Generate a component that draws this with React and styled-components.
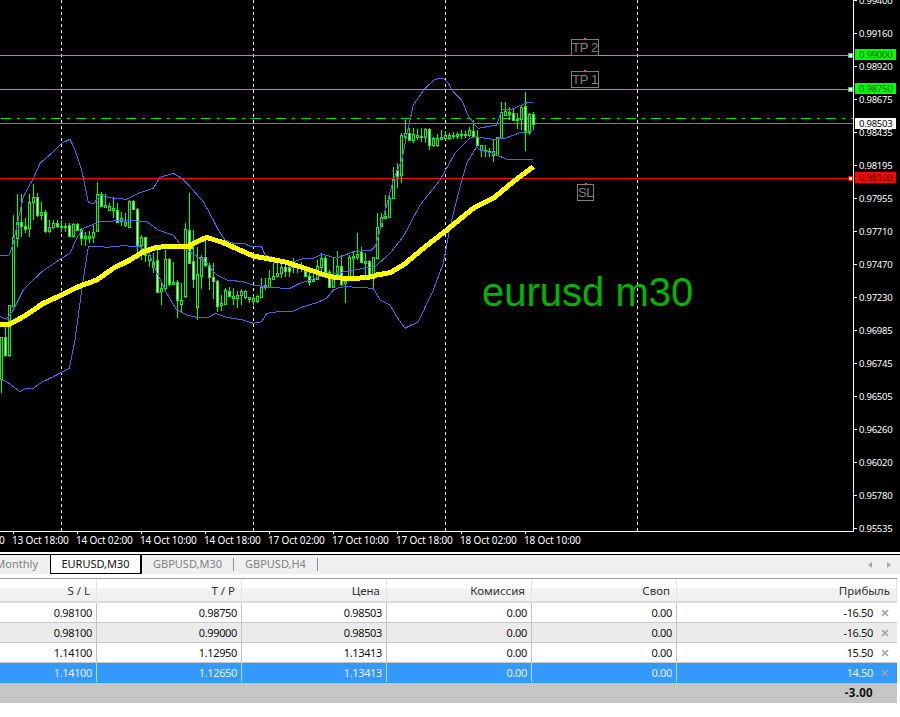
import React from 'react';
import styled, { createGlobalStyle } from 'styled-components';
import { X } from 'lucide-react';

const GlobalStyle = createGlobalStyle`
  body {
    margin: 0;
    background: #fff;
    font-family: "Noto Sans", "Liberation Sans", sans-serif;
    overflow: hidden;
  }
`;

// candles read off the chart: [wick top, wick bottom, body top, body bottom, white body]
// values are in 3x crop units, oy is the y of the crop
const toCandles = (oy, rows) =>
  rows.map(([wt, wb, bt, bb, w]) => ({
    wt: oy + wt / 3,
    wb: oy + wb / 3,
    bt: oy + bt / 3,
    bb: oy + bb / 3,
    w,
  }));

const candles = [
  ...toCandles(120, [
    [652, 820, 652, 778, 0], [620, 710, 652, 705, 1], [555, 710, 555, 705, 0], [285, 557, 350, 557, 0],
    [222, 382, 305, 352, 0], [222, 350, 305, 317, 1], [295, 340, 317, 325, 1], [222, 350, 247, 325, 0],
    [192, 300, 232, 247, 0], [218, 290, 232, 285, 1], [245, 300, 275, 285, 0], [270, 338, 275, 332, 1],
    [300, 338, 322, 335, 0], [300, 328, 310, 322, 0], [300, 325, 310, 320, 1], [300, 335, 318, 322, 0],
    [310, 335, 318, 322, 0], [310, 350, 315, 347, 1], [310, 350, 312, 347, 0], [310, 332, 312, 330, 1],
    [325, 375, 327, 355, 1], [335, 378, 349, 355, 0], [332, 370, 347, 352, 0], [315, 370, 335, 350, 0],
    [185, 335, 222, 332, 0], [215, 260, 222, 257, 1], [222, 265, 255, 262, 0], [250, 270, 257, 268, 0],
    [230, 295, 265, 272, 0], [250, 310, 270, 305, 1], [275, 318, 295, 305, 0], [280, 320, 305, 315, 0],
    [240, 322, 243, 320, 0], [240, 270, 243, 268, 1], [265, 418, 268, 375, 1], [345, 420, 352, 375, 0],
    [350, 425, 352, 405, 1], [395, 440, 405, 420, 0], [400, 460, 425, 440, 0], [385, 520, 420, 515, 1],
    [490, 555, 505, 515, 0], [390, 510, 418, 505, 0], [415, 498, 418, 492, 1], [425, 490, 485, 490, 0],
    [480, 595, 485, 540, 1], [490, 575, 540, 552, 0], [310, 535, 328, 530, 0], [220, 432, 330, 428, 1],
  ]),
  ...toCandles(180, [
    [150, 325, 243, 298, 1], [200, 420, 283, 382, 0], [225, 328, 230, 287, 0], [165, 260, 230, 254, 1],
    [250, 330, 254, 290, 1], [250, 358, 292, 305, 1], [300, 395, 303, 377, 1], [345, 392, 370, 377, 0],
    [325, 375, 330, 372, 0], [320, 352, 334, 350, 1], [325, 375, 347, 353, 0], [333, 385, 345, 353, 0],
    [328, 375, 334, 347, 0], [330, 358, 334, 352, 0], [350, 368, 352, 357, 0], [348, 375, 354, 362, 0],
    [345, 368, 347, 362, 0], [295, 355, 321, 352, 0], [295, 330, 316, 322, 0], [270, 325, 294, 320, 0],
    [250, 298, 287, 296, 0], [250, 292, 279, 287, 0], [252, 295, 262, 281, 0], [250, 292, 262, 275, 1],
    [250, 290, 262, 275, 1], [235, 280, 250, 262, 0], [250, 278, 258, 262, 0], [245, 275, 258, 265, 0],
    [262, 290, 272, 287, 1], [270, 318, 287, 305, 1], [280, 305, 297, 303, 0], [240, 300, 258, 297, 0],
    [220, 290, 235, 262, 0], [225, 280, 235, 278, 1], [270, 322, 275, 320, 1], [232, 322, 290, 320, 0],
    [212, 295, 257, 282, 0], [225, 318, 257, 312, 1], [290, 368, 303, 310, 0], [225, 290, 230, 288, 0],
    [213, 290, 228, 235, 0], [160, 240, 222, 232, 0],
  ]),
  ...toCandles(120, [
    [380, 430, 397, 428, 1], [400, 468, 424, 430, 0], [420, 470, 424, 468, 1], [410, 505, 412, 468, 0],
    [280, 415, 320, 412, 0], [280, 322, 290, 318, 0], [225, 295, 287, 292, 0], [225, 295, 235, 292, 0],
    [140, 238, 178, 235, 0], [130, 205, 150, 168, 1], [40, 190, 46, 165, 0], [0, 60, 38, 46, 0],
    [25, 62, 40, 60, 1], [25, 70, 42, 60, 0], [28, 60, 44, 50, 0], [25, 65, 48, 52, 0],
    [25, 68, 28, 52, 0], [25, 90, 28, 76, 1], [50, 82, 55, 76, 0], [42, 80, 55, 76, 0],
    [30, 60, 50, 56, 0], [34, 60, 44, 52, 0], [38, 60, 46, 55, 0], [36, 56, 46, 50, 0],
    [35, 58, 42, 48, 0], [30, 56, 42, 46, 0], [32, 54, 42, 46, 0], [22, 50, 30, 44, 0],
    [0, 55, 34, 50, 1],
  ]),
  ...toCandles(30, [
    [300, 348, 320, 345, 1], [345, 380, 344, 358, 0], [345, 382, 360, 362, 0], [355, 382, 362, 364, 0],
    [330, 395, 362, 373, 0], [320, 378, 322, 375, 0], [215, 325, 245, 322, 0], [215, 258, 243, 254, 0],
    [230, 270, 245, 250, 0], [235, 272, 248, 270, 1], [250, 298, 266, 270, 0], [228, 300, 232, 268, 0],
    [185, 362, 228, 305, 1], [250, 315, 252, 305, 0], [247, 300, 252, 282, 1],
  ]),
];

// indicator lines, read off the same crops
const fromCrop = (ox, oy, pts) => pts.map(([a, b]) => [ox + a / 3, oy + b / 3]);

const toPoints = (pts) => pts.map(([x, y]) => `${x.toFixed(1)},${y.toFixed(1)}`).join(' ');

const upperBand = toPoints([
  ...fromCrop(0, 120, [[0, 406], [28, 405], [40, 370], [50, 320], [70, 230], [100, 175], [120, 130], [160, 95], [185, 70], [210, 58], [225, 90], [245, 150], [265, 248], [282, 250], [300, 225], [340, 235], [380, 238], [420, 218], [460, 205], [480, 172], [520, 160], [545, 175]]),
  ...fromCrop(190, 180, [[0, 20], [40, 65], [70, 120], [85, 150], [105, 180], [130, 190], [160, 190], [185, 200], [215, 200], [225, 225], [300, 248], [340, 236], [370, 235], [395, 222], [440, 235], [490, 215], [545, 210]]),
  ...fromCrop(360, 120, [[45, 380], [55, 350], [100, 180], [125, 120]]),
  ...fromCrop(380, 30, [[88, 280], [100, 225], [135, 175], [165, 148], [190, 145], [205, 160], [220, 185], [245, 210], [265, 258], [285, 285], [295, 295], [350, 285], [365, 240], [395, 238], [425, 225], [445, 217], [460, 217]]),
]);

const middleBand = toPoints([
  ...fromCrop(0, 120, [[0, 590], [20, 598], [40, 570], [70, 510], [100, 480], [125, 455], [185, 415], [210, 400], [230, 355], [250, 325], [300, 305], [340, 303], [400, 302], [440, 305], [475, 330], [520, 345], [545, 380], [600, 415]]),
  ...fromCrop(190, 180, [[50, 250], [80, 285], [110, 300], [160, 305], [190, 315], [240, 323], [300, 325], [330, 310], [400, 287], [440, 280], [490, 270]]),
  ...fromCrop(360, 120, [[45, 440], [90, 400], [130, 350], [180, 255], [200, 230], [240, 180], [285, 100], [330, 55], [345, 50], [400, 58], [435, 55], [480, 38], [515, 32]]),
]);

const lowerBand = toPoints([
  ...fromCrop(0, 120, [[0, 778], [20, 785], [60, 815], [80, 805], [100, 805], [125, 787], [160, 770], [208, 745], [225, 660], [245, 510], [265, 380], [280, 378], [320, 382], [370, 377], [420, 380], [445, 395], [465, 445], [500, 520], [530, 570], [560, 585]]),
  ...fromCrop(190, 180, [[20, 412], [55, 413], [75, 400], [110, 412], [160, 420], [190, 430], [215, 425], [230, 400], [265, 395], [305, 395], [340, 380], [380, 368], [410, 355], [430, 330], [450, 322], [470, 320]]),
  ...fromCrop(360, 120, [[40, 505], [60, 540], [90, 555], [110, 590], [135, 625], [175, 605], [220, 510], [250, 430], [270, 320], [300, 200], [320, 130], [350, 80], [360, 90], [400, 100], [440, 118], [520, 118]]),
]);

const movingAverage = toPoints([
  ...fromCrop(0, 120, [[0, 612], [30, 612], [70, 590], [100, 570], [130, 550], [185, 525], [240, 498], [290, 480], [340, 445], [390, 420], [430, 395], [470, 382], [530, 378], [570, 378]]),
  ...fromCrop(190, 180, [[0, 195], [50, 172], [100, 188], [190, 228], [290, 247], [360, 270], [420, 290], [480, 297], [550, 290]]),
  ...fromCrop(360, 120, [[50, 465], [90, 458], [130, 435], [190, 385], [260, 330], [340, 265], [400, 235], [460, 185], [520, 140]]),
]);

const priceScale = ['0.99400', '0.99160', '0.98920', '0.98675', '0.98435', '0.98195', '0.97955', '0.97710', '0.97470', '0.97230', '0.96985', '0.96745', '0.96505', '0.96260', '0.96020', '0.95780', '0.95535'];

const timeScale = ['13 Oct 10:00', '13 Oct 18:00', '14 Oct 02:00', '14 Oct 10:00', '14 Oct 18:00', '17 Oct 02:00', '17 Oct 10:00', '17 Oct 18:00', '18 Oct 02:00', '18 Oct 10:00'];

const orderBadges = [
  { price: '0.99000', top: 49, bg: '#00ff00', color: '#004d00' },
  { price: '0.98750', top: 83, bg: '#00ff00', color: '#004d00' },
  { price: '0.98503', top: 118, bg: '#ffffff', color: '#000' },
  { price: '0.98100', top: 172, bg: '#ff0000', color: '#3d0000' },
];

const tradeTags = [
  { label: 'TP 2', x: 571, y: 39, width: 28 },
  { label: 'TP 1', x: 571, y: 71, width: 28 },
  { label: 'SL', x: 577, y: 184, width: 17 },
];

const columns = ['S / L', 'T / P', 'Цена', 'Комиссия', 'Своп', 'Прибыль'];

const orders = [
  { sl: '0.98100', tp: '0.98750', price: '0.98503', profit: '-16.50', tone: 'plain' },
  { sl: '0.98100', tp: '0.99000', price: '0.98503', profit: '-16.50', tone: 'alt' },
  { sl: '1.14100', tp: '1.12950', price: '1.13413', profit: '15.50', tone: 'plain' },
  { sl: '1.14100', tp: '1.12650', price: '1.13413', profit: '14.50', tone: 'selected' },
];

const rowColors = {
  plain: '#ffffff',
  alt: '#ebebeb',
  selected: '#3399ff',
  total: '#c6c6c6',
};

const App = () => {
  return (
    <Page>
      <GlobalStyle />
      <Chart>
        <ChartBody>
          <Plot>
            <PlotSvg viewBox="0 0 853 531" width="853" height="531">
              {[61, 253, 445, 637].map((x) => (
                <line key={x} x1={x + 0.5} x2={x + 0.5} y1="0" y2="531" stroke="#fff" strokeDasharray="3 3" />
              ))}
              <line x1="0" x2="853" y1="55.5" y2="55.5" stroke="#00ff00" />
              <line x1="0" x2="853" y1="89.5" y2="89.5" stroke="#00ff00" />
              <line x1="1" x2="853" y1="118.5" y2="118.5" stroke="#00e000" strokeDasharray="10 6 3 6" />
              <line x1="0" x2="853" y1="123.5" y2="123.5" stroke="#808080" />
              <line x1="0" x2="853" y1="178.5" y2="178.5" stroke="#ff0000" />
              {candles.map((c, i) => {
                const x = 1 + i * 4;
                return (
                  <g key={i}>
                    <line x1={x + 0.5} x2={x + 0.5} y1={c.wt} y2={c.wb} stroke="#00ff00" />
                    <rect
                      x={x - 0.5}
                      y={Math.round(c.bt) + 0.5}
                      width="2"
                      height={Math.max(1, Math.round(c.bb - c.bt))}
                      fill={c.w ? '#fff' : '#000'}
                      stroke="#00ff00"
                    />
                  </g>
                );
              })}
              <polyline points={upperBand} fill="none" stroke="#4169e1" />
              <polyline points={middleBand} fill="none" stroke="#4169e1" />
              <polyline points={lowerBand} fill="none" stroke="#4169e1" />
              <polyline points={movingAverage} fill="none" stroke="#ffff00" strokeWidth="5" />
              {[[55, '#00ff00'], [89, '#00ff00'], [178, '#ff0000']].map(([y, color]) => (
                <rect key={y} x="848.5" y={y - 2 + 0.5} width="4" height="4" fill="#fff" stroke={color} />
              ))}
            </PlotSvg>
            {tradeTags.map((tag) => (
              <TradeTag key={tag.label} $x={tag.x} $y={tag.y} $width={tag.width}>{tag.label}</TradeTag>
            ))}
            <PairTitle>eurusd m30</PairTitle>
          </Plot>
          <PriceAxis>
            {priceScale.map((price) => (
              <PriceTick key={price}>{price}</PriceTick>
            ))}
            {orderBadges.map((badge) => (
              <PriceBadge key={badge.price} $top={badge.top} $bg={badge.bg} $color={badge.color}>
                {badge.price}
              </PriceBadge>
            ))}
          </PriceAxis>
        </ChartBody>
        <TimeAxis>
          {timeScale.map((time) => (
            <TimeTick key={time}>{time}</TimeTick>
          ))}
        </TimeAxis>
      </Chart>

      <TabBar>
        <ClippedTab>Monthly</ClippedTab>
        <ActiveTab>EURUSD,M30</ActiveTab>
        <Tab>GBPUSD,M30</Tab>
        <Tab>GBPUSD,H4</Tab>
        <TabArrows>
          <ArrowLeft />
          <ArrowRight />
        </TabArrows>
      </TabBar>

      <Terminal>
        <HeaderRow>
          {columns.map((name) => (
            <HeaderCell key={name}>{name}</HeaderCell>
          ))}
        </HeaderRow>
        {orders.map((order, i) => (
          <Row key={i} $tone={order.tone}>
            <Cell $tone={order.tone}>{order.sl}</Cell>
            <Cell $tone={order.tone}>{order.tp}</Cell>
            <Cell $tone={order.tone}>{order.price}</Cell>
            <Cell $tone={order.tone}>0.00</Cell>
            <Cell $tone={order.tone}>0.00</Cell>
            <ProfitCell $tone={order.tone}>
              {order.profit}
              <CloseIcon><X size={10} strokeWidth={4} color="#a3a3a3" /></CloseIcon>
            </ProfitCell>
          </Row>
        ))}
        <TotalRow>
          <TotalValue>-3.00</TotalValue>
        </TotalRow>
      </Terminal>
    </Page>
  );
};

export default App;

const Page = styled.div`
  width: 900px;
  height: 717px;
  display: flex;
  flex-direction: column;
  background: #fff;
`;

const Chart = styled.div`
  height: 552px;
  flex: none;
  background: #000;
  overflow: hidden;
`;

const ChartBody = styled.div`
  display: flex;
  height: 532px;
`;

const Plot = styled.div`
  position: relative;
  flex: none;
  width: 854px;
  height: 532px;
  box-sizing: border-box;
  border-right: 1px solid #fff;
  border-bottom: 1px solid #fff;
`;

const PlotSvg = styled.svg`
  display: block;
  shape-rendering: crispEdges;
`;

const TradeTag = styled.div`
  position: absolute;
  left: ${(props) => props.$x}px;
  top: ${(props) => props.$y}px;
  width: ${(props) => props.$width}px;
  box-sizing: border-box;
  height: 17px;
  border: 1px solid #808080;
  color: #808080;
  font-family: "Liberation Sans", sans-serif;
  font-size: 13px;
  letter-spacing: -0.3px;
  line-height: 15px;
  text-align: center;
  white-space: nowrap;

  &::before {
    content: "";
    position: absolute;
    top: -2px;
    left: 50%;
    width: 2px;
    height: 2px;
    margin-left: -1px;
    background: #e05050;
  }
`;

const PairTitle = styled.div`
  position: absolute;
  left: 482px;
  top: 269px;
  color: #00b400;
  font-family: "Liberation Sans", sans-serif;
  font-size: 40px;
  line-height: 46px;
  white-space: nowrap;
`;

const PriceAxis = styled.div`
  position: relative;
  flex: 1;
  display: flex;
  flex-direction: column;
  margin-top: -16px;
`;

const PriceTick = styled.div`
  position: relative;
  flex: none;
  height: 33px;
  padding-left: 5px;
  color: #fff;
  font-size: 9.5px;
  letter-spacing: -0.25px;
  line-height: 33px;

  &::before {
    content: "";
    position: absolute;
    left: 0;
    top: 16px;
    width: 3px;
    height: 1px;
    background: #fff;
  }
`;

const PriceBadge = styled.div`
  position: absolute;
  left: 1px;
  top: ${(props) => props.$top + 16}px;
  width: 41px;
  height: 11px;
  padding-left: 4px;
  box-sizing: border-box;
  background: ${(props) => props.$bg};
  color: ${(props) => props.$color};
  font-size: 9.5px;
  letter-spacing: -0.25px;
  line-height: 11px;
`;

const TimeAxis = styled.div`
  display: flex;
  height: 20px;
  margin-left: -52px;
`;

const TimeTick = styled.div`
  position: relative;
  flex: none;
  width: 64px;
  padding-top: 1px;
  color: #fff;
  font-size: 10px;
  letter-spacing: -0.15px;
  line-height: 14px;
  white-space: nowrap;

  &::before {
    content: "";
    position: absolute;
    left: 1px;
    top: -1px;
    width: 1px;
    height: 3px;
    background: #fff;
  }
`;

const TabBar = styled.div`
  flex: none;
  display: flex;
  align-items: stretch;
  height: 20px;
  margin-top: 2px;
  box-sizing: border-box;
  border-top: 1px solid #000;
  background: #f0f0f0;
  color: #808080;
  font-size: 11px;
  line-height: 18px;
`;

const ClippedTab = styled.div`
  flex: none;
  width: 38px;
  padding-right: 12px;
  display: flex;
  justify-content: flex-end;
`;

const ActiveTab = styled.div`
  flex: none;
  width: 92px;
  box-sizing: border-box;
  text-align: center;
  background: #fff;
  color: #111;
  border-left: 1px solid #000;
  border-right: 2px solid #000;
  border-bottom: 1px solid #000;
`;

const Tab = styled.div`
  flex: none;
  position: relative;
  padding: 0 12px 0 11px;
  white-space: nowrap;

  &::after {
    content: "";
    position: absolute;
    right: 0;
    top: 3px;
    width: 1px;
    height: 13px;
    background: #909090;
  }
`;

const TabArrows = styled.div`
  margin-left: auto;
  display: flex;
  align-items: center;
  gap: 15px;
  padding-right: 9px;
`;

const ArrowLeft = styled.span`
  width: 0;
  height: 0;
  border-top: 3.5px solid transparent;
  border-bottom: 3.5px solid transparent;
  border-right: 4px solid #a8a8a8;
`;

const ArrowRight = styled.span`
  width: 0;
  height: 0;
  border-top: 3.5px solid transparent;
  border-bottom: 3.5px solid transparent;
  border-left: 4px solid #a8a8a8;
`;

const Terminal = styled.div`
  flex: none;
  width: 897px;
  margin-top: 4px;
  border-top: 1px solid #a0a0a0;
  font-size: 11px;
  letter-spacing: -0.35px;
`;

const HeaderRow = styled.div`
  display: grid;
  grid-template-columns: 97px repeat(4, 145px) 1fr;
  height: 24px;
  box-sizing: border-box;
  border-bottom: 2px solid #dcdcdc;
  background: linear-gradient(#fff 0, #fff 40%, #f2f2f2 45%, #f0f0f0 100%);
  font-size: 11.5px;
  letter-spacing: 0;
`;

const HeaderCell = styled.div`
  padding-right: 6px;
  text-align: right;
  color: #333;
  line-height: 23px;
  border-right: 1px solid #e4e4e4;
`;

const Row = styled.div`
  display: grid;
  grid-template-columns: 97px repeat(4, 145px) 1fr;
  height: 20px;
  box-sizing: border-box;
  background: ${(props) => rowColors[props.$tone]};
  border-bottom: 1px solid ${(props) => (props.$tone === 'selected' ? '#3399ff' : '#c8c8c8')};
`;

const Cell = styled.div`
  padding-right: 4px;
  text-align: right;
  line-height: 19px;
  color: ${(props) => (props.$tone === 'selected' ? '#e6f2ff' : '#111')};
  border-right: 1px solid ${(props) => (props.$tone === 'selected' ? '#b8d8f8' : '#c4c4c4')};
`;

const ProfitCell = styled(Cell)`
  display: flex;
  justify-content: flex-end;
  align-items: center;
  padding-right: 0;
  border-right: none;
`;

const CloseIcon = styled.span`
  display: flex;
  justify-content: center;
  width: 24px;
`;

const TotalRow = styled.div`
  display: flex;
  justify-content: flex-end;
  height: 20px;
  padding-right: 24px;
  background: ${rowColors.total};
`;

const TotalValue = styled.div`
  font-weight: 700;
  letter-spacing: 0.3px;
  line-height: 20px;
  color: #111;
  font-size: 11.5px;
`;
